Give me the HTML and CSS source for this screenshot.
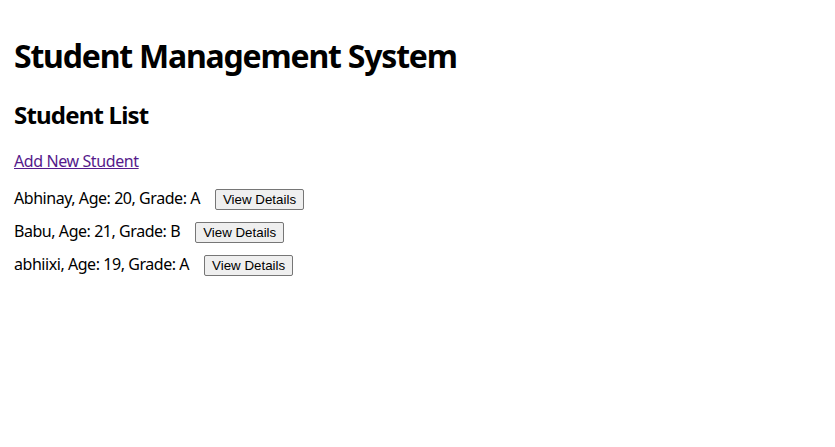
FILE: index.html
```html
<!DOCTYPE html>
<html lang="en">
<head>
<meta charset="utf-8">
<title>Student Management System</title>
<link rel="stylesheet" href="styles.css">
</head>
<body>
<div class="app">
  <h1 class="title">Student Management System</h1>
  <h2 class="subtitle">Student List</h2>
  <p class="add"><a href="#" class="add-link">Add New Student</a></p>
  <div class="list">
    <div class="row"><span class="info">Abhinay, Age: 20, Grade: A</span><button class="btn">View Details</button></div>
    <div class="row"><span class="info">Babu, Age: 21, Grade: B</span><button class="btn">View Details</button></div>
    <div class="row"><span class="info">abhiixi, Age: 19, Grade: A</span><button class="btn">View Details</button></div>
  </div>
</div>
</body>
</html>
```
FILE: styles.css
```css
html, body {
  margin: 0;
  background: #fff;
}
body {
  font-family: "Noto Sans", "Open Sans", sans-serif;
  font-size: 16px;
  line-height: 21.3px;
  color: #000;
}
.app {
  padding: 14px 14px;
}
.title {
  font-size: 32px;
  line-height: 42.5px;
  font-weight: 700;
  letter-spacing: -1.2px;
  margin: 21.44px 0;
}
.subtitle {
  font-size: 24px;
  line-height: 32px;
  font-weight: 700;
  letter-spacing: -0.8px;
  margin: 19.92px 0;
}
.add {
  margin: 16px 0 15px;
}
.add-link {
  color: #551a8b;
  letter-spacing: -0.4px;
}
.list {
  display: flex;
  flex-direction: column;
}
.row {
  display: flex;
  align-items: center;
  height: 23px;
  margin-bottom: 10px;
}
.info {
  letter-spacing: -0.45px;
}
.btn {
  margin-left: 15px;
  font-family: "Liberation Sans", Arial, sans-serif;
  font-size: 13.33px;
  height: 21px;
  padding: 1px 7px;
  border: 1px solid #767676;
  border-radius: 2px;
  background: #efefef;
  color: #000;
}
```
